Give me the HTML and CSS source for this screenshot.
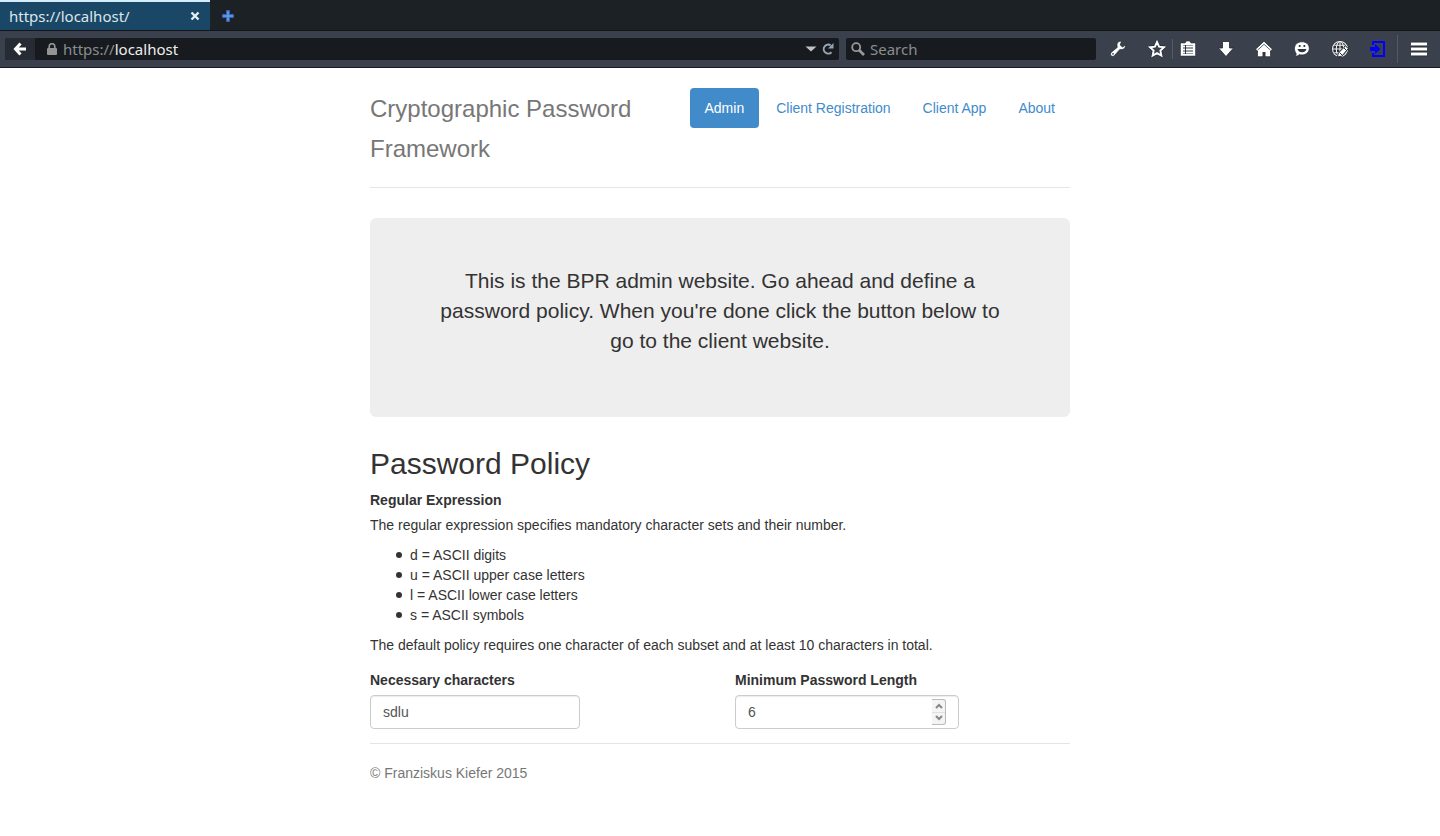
FILE: index.html
```html
<!DOCTYPE html>
<html lang="en">
<head>
<meta charset="utf-8">
<title>Cryptographic Password Framework</title>
<link rel="stylesheet" href="styles.css">
</head>
<body>
<div class="browser">
  <div class="tabs">
    <div class="tab">
      <span class="tab-title">https://localhost/</span>
      <button class="chrome-button" aria-label="Close tab"><svg width="10" height="10" viewBox="0 0 10 10"><path d="M1.500 1.500l7 7M8.500 1.500l-7 7" stroke="#e3eef4" stroke-width="2.400"/></svg></button>
    </div>
    <button class="chrome-button new-tab" aria-label="New tab"><svg width="12" height="12" viewBox="0 0 12 12"><path d="M4.500.5h3v4h4v3h-4v4h-3v-4h-4v-3h4z" fill="#4b80d0" stroke="#3565af"/><path d="M6 1.500v9M1.500 6h9" stroke="#6fa2ee"/></svg></button>
  </div>
  <div class="toolbar">
    <div class="address">
      <button class="chrome-button back" aria-label="Back"><svg width="14" height="14" viewBox="0 0 14 14"><path d="M7.500 1.500L2.500 7l5 5.500M3 7h10" fill="none" stroke="#fff" stroke-width="3"/></svg></button>
      <svg class="lock" width="10" height="12" viewBox="0 0 10 12"><path d="M2.200 6V3.500a2.800 2.800 0 0 1 5.600 0V6" fill="none" stroke="#949494" stroke-width="1.700"/><rect y="5" width="10" height="7" rx="1" fill="#949494"/></svg>
      <span class="url" role="textbox" aria-label="Address"><span class="scheme">https://</span>localhost</span>
      <button class="chrome-button" aria-label="Show history"><svg width="12" height="6" viewBox="0 0 12 6"><path d="M.5.5h11L6 5.500z" fill="#bfc1c2"/></svg></button>
      <button class="chrome-button reload" aria-label="Reload"><svg width="12" height="12" viewBox="0 0 12 12"><path d="M9.500 9.200A4.500 4.500 0 1 1 8.600 2.300" fill="none" stroke="#98a5b5" stroke-width="2"/><path d="M11.500 0v5.500H6z" fill="#98a5b5"/></svg></button>
    </div>
    <label class="search">
      <svg width="14" height="14" viewBox="0 0 14 14"><circle cx="5.200" cy="5.200" r="4" fill="none" stroke="#999" stroke-width="1.800"/><path d="M8 8l5 5" stroke="#999" stroke-width="2.600"/></svg>
      <input type="text" placeholder="Search" aria-label="Search">
    </label>
    <div class="tools">
      <button class="chrome-button tool" aria-label="Developer tools"><svg width="18" height="18" viewBox="0 0 18 18"><path d="M17.500 5l-3 2-2.300-2L13.500 1.500C10.800.8 8.700 2.800 9 5.500c0 .7.200 1.200.4 1.700L3.300 12.300c-2.300 2.400.7 5.600 3.200 3.200l5.300-6c3.300.9 6.100-1.500 5.700-4.500z" fill="#fff" stroke="#20252c" stroke-width=".7"/><circle cx="5" cy="13.800" r=".9" fill="#333a44"/></svg></button>
      <button class="chrome-button tool star" aria-label="Bookmark this page"><svg width="18" height="18" viewBox="0 0 18 18"><path d="M9 2l2.100 4.600 5 .6-3.700 3.400 1 5L9 13.100l-4.400 2.500 1-5L1.900 7.200l5-.6z" fill="#3a414c" stroke="#20252c" stroke-width="3"/><path d="M9 2l2.100 4.600 5 .6-3.700 3.400 1 5L9 13.100l-4.400 2.500 1-5L1.900 7.200l5-.6z" fill="#3a414c" stroke="#fff" stroke-width="1.900"/></svg></button>
      <button class="chrome-button tool list" aria-label="Bookmarks"><svg width="18" height="18" viewBox="0 0 18 18"><path d="M1.500 3H6l1.500-2h3L12 3h4.500v13h-15z" fill="#fff" stroke="#20252c" stroke-width=".5"/><path d="M4 5h10v9H4z" fill="#30363f"/><path d="M4 6.500h2M7 6.500h7M4 9.500h2M7 9.500h7M4 12.500h2M7 12.500h7" stroke="#fff" stroke-width="1.800"/></svg></button>
      <button class="chrome-button tool" aria-label="Downloads"><svg width="18" height="18" viewBox="0 0 18 18"><path d="M5.500 1.500h7V8h4L9 16.500 1.500 8h4z" fill="#fff" stroke="#20252c" stroke-width=".8"/></svg></button>
      <button class="chrome-button tool" aria-label="Home"><svg width="18" height="18" viewBox="0 0 18 18"><path d="M.5 9.300L9 1.200l8.500 8.100L15.500 11v5.700h-13V11z" fill="#fff" stroke="#20252c" stroke-width=".7"/><path d="M2.500 10.200L9 4.300l6.500 5.900" fill="none" stroke="#4a505a" stroke-width=".9"/><path d="M7.500 17v-5h3v5z" fill="#30363f"/></svg></button>
      <button class="chrome-button tool" aria-label="Hello"><svg width="18" height="18" viewBox="0 0 18 18"><path d="M9 1.800c4.200 0 7.300 2.700 7.300 6.500s-3.100 6.700-7.300 6.700c-1 0-1.800-.1-2.700-.4-1 1-2.500 1.700-4.300 1.600 1-.9 1.400-1.900 1.100-2.800-1-1.300-1.600-3-1.600-5C1.500 4.500 4.800 1.800 9 1.800z" fill="#fff" stroke="#20252c" stroke-width=".7"/><path d="M5.800 5h1.700v2H5.800zM10.500 5h1.700v2h-1.700zM4.500 9h9c-.5 2-2.200 3.300-4.500 3.300S5 11 4.500 9z" fill="#30363f"/></svg></button>
      <button class="chrome-button tool" aria-label="Web proxy"><svg width="18" height="18" viewBox="0 0 18 18"><circle cx="9" cy="9" r="8.600" fill="#272c34"/><g fill="none" stroke="#eee" stroke-width="1.100"><circle cx="9" cy="9" r="7.500"/><ellipse cx="9" cy="9" rx="3.700" ry="7.500"/><path d="M9 2v14M2 9h14M3.300 5.300h11.400M3.300 12.700h11.400"/></g><path d="M14.500 6l2.800 2.500-6.500 7.700-4.300.8.800-4z" fill="#fff" stroke="#272c34"/><path d="M8.500 12.500l2.500 2.500M13 8l2.500 2.500" stroke="#272c34"/></svg></button>
      <button class="chrome-button tool" aria-label="Sign in"><svg width="18" height="18" viewBox="0 0 18 18"><path d="M4 5V2h11v14H4v-3" fill="none" stroke="#00f" stroke-width="2"/><path d="M1 7h5V4l5.500 5L6 14v-3H1z" fill="#00f"/></svg></button>
    </div>
    <button class="chrome-button menu" aria-label="Open menu"><svg width="18" height="16" viewBox="0 0 18 16"><path d="M1 3h16M1 8h16M1 13h16" stroke="#20252c" stroke-width="4.500"/><path d="M1 3h16M1 8h16M1 13h16" stroke="#fff" stroke-width="3"/></svg></button>
  </div>
</div>

<div class="container">
  <header class="header">
    <h3 class="brand">Cryptographic Password Framework</h3>
    <nav class="nav">
      <a class="nav-link active" href="#admin">Admin</a>
      <a class="nav-link" href="#registration">Client Registration</a>
      <a class="nav-link" href="#app">Client App</a>
      <a class="nav-link" href="#about">About</a>
    </nav>
  </header>

  <section class="jumbotron">
    <p class="lead">This is the BPR admin website. Go ahead and define a password policy. When you're done click the button below to go to the client website.</p>
  </section>

  <main>
    <h2 class="heading">Password Policy</h2>
    <h4 class="label">Regular Expression</h4>
    <p class="text">The regular expression specifies mandatory character sets and their number.</p>
    <ul class="sets">
      <li>d = ASCII digits</li>
      <li>u = ASCII upper case letters</li>
      <li>l = ASCII lower case letters</li>
      <li>s = ASCII symbols</li>
    </ul>
    <p class="text">The default policy requires one character of each subset and at least 10 characters in total.</p>
    <form class="form">
      <div>
        <label class="label" for="chars">Necessary characters</label>
        <input class="control" id="chars" type="text" value="sdlu">
      </div>
      <div>
        <label class="label" for="length">Minimum Password Length</label>
        <div class="number">
          <input class="control" id="length" type="number" value="6">
          <div class="spinner">
            <button type="button" class="step" aria-label="Increase"><svg width="8" height="6" viewBox="0 0 8 6"><path d="M1 5l3-3 3 3" fill="none" stroke="#888" stroke-width="2"/></svg></button>
            <button type="button" class="step" aria-label="Decrease"><svg width="8" height="6" viewBox="0 0 8 6"><path d="M1 1l3 3 3-3" fill="none" stroke="#888" stroke-width="2"/></svg></button>
          </div>
        </div>
      </div>
    </form>
  </main>

  <footer class="footer">© Franziskus Kiefer 2015</footer>
</div>
</body>
</html>
```
FILE: styles.css
```css
* { box-sizing: border-box; }
body {
  margin: 0;
  background: #fff;
  color: #333;
  font: 14px/20px "Liberation Sans", Arial, sans-serif;
}
svg { display: block; flex: none; }

/* Browser chrome */
.browser { font: 15px/20px "Noto Sans", "Open Sans", sans-serif; }
.chrome-button {
  display: flex;
  align-items: center;
  justify-content: center;
  padding: 0;
  border: 0;
  background: none;
}
.tabs {
  display: flex;
  height: 31px;
  background: #1c2126;
  border-bottom: 1px solid #12161a;
}
.tab {
  display: flex;
  align-items: center;
  justify-content: space-between;
  width: 210px;
  padding: 0 10px 0 9px;
  background: #1a4766;
  border-top: 2px solid #d4edfc;
  color: #dce6ec;
}
.new-tab { padding: 2px 12px 0; }
.toolbar {
  display: flex;
  align-items: center;
  height: 37px;
  padding-left: 5px;
  background: #3a414c;
  border-bottom: 1px solid #16191d;
}
.address, .search {
  display: flex;
  align-items: center;
  height: 22px;
  background: #171b1f;
  border-radius: 2px;
}
.address {
  flex: 1;
  padding-right: 5px;
  color: #eeeeec;
}
.back {
  width: 30px;
  height: 22px;
  background: #272c34;
  border-radius: 2px 0 0 2px;
}
.lock { margin: 0 6px 0 12px; }
.url { flex: 1; }
.scheme { color: #8b8d8f; }
.reload { margin-left: 5px; }
.search {
  width: 250px;
  gap: 5px;
  margin-left: 7px;
  padding-left: 5px;
}
.search input {
  flex: 1;
  min-width: 0;
  padding: 0;
  border: 0;
  outline: 0;
  background: none;
  color: #eee;
  font: inherit;
}
.search input::placeholder { color: #8b8d8f; opacity: 1; }
.tools {
  display: flex;
  align-items: center;
  padding-left: 2px;
}
.tool { width: 38px; height: 20px; }
.tool.star {
  width: 37px;
  padding-left: 6px;
  border-right: 1px solid #545b65;
}
.tool.list { width: 34px; padding-right: 4px; }
.menu {
  width: 43px;
  height: 28px;
  border-left: 1px solid #535a64;
}

/* Page */
.container {
  max-width: 700px;
  margin: 0 auto;
  padding-top: 20px;
}
.header {
  display: flex;
  align-items: flex-start;
  margin-bottom: 30px;
  padding-bottom: 18px;
  border-bottom: 1px solid #e5e5e5;
}
.brand {
  flex: 1;
  margin: 0;
  padding-top: 1px;
  color: #777;
  font-size: 24px;
  font-weight: 400;
  line-height: 40px;
}
.nav { display: flex; gap: 2px; }
.nav-link {
  padding: 10px 15px;
  border-radius: 4px;
  color: #428bca;
  text-decoration: none;
}
.nav-link.active { background: #428bca; color: #fff; }
.jumbotron {
  margin-bottom: 30px;
  padding: 48px 60px 61px;
  border-radius: 6px;
  background: #eee;
  text-align: center;
}
.lead { margin: 0; font-size: 21px; line-height: 30px; }
.heading {
  margin: 0 0 10px;
  font-size: 30px;
  font-weight: 400;
  line-height: 33px;
}
.label {
  display: block;
  margin: 0 0 5px;
  font-size: 14px;
  font-weight: 700;
}
.text { margin: 0 0 10px; }
.sets { margin: 0 0 10px; padding-left: 26px; list-style: none; }
.sets li { display: flex; align-items: center; gap: 8px; }
.sets li::before {
  content: "";
  width: 6px;
  height: 6px;
  border-radius: 50%;
  background: #333;
}
.form {
  display: grid;
  grid-template-columns: 1fr 1fr;
  gap: 30px;
  padding-top: 5px;
}
.control {
  display: block;
  width: 210px;
  height: 34px;
  padding: 6px 12px;
  border: 1px solid #ccc;
  border-radius: 4px;
  background: #fff;
  box-shadow: inset 0 1px 1px rgba(0, 0, 0, .075);
  color: #555;
  font: inherit;
}
.number { position: relative; width: 224px; }
.number .control { width: 100%; appearance: textfield; }
.number .control::-webkit-inner-spin-button { appearance: none; margin: 0; }
.spinner {
  position: absolute;
  top: 4px;
  right: 13px;
  width: 14px;
  height: 26px;
  display: flex;
  flex-direction: column;
  border: 1px solid #bbb;
  border-left: 0;
  border-radius: 0 3px 3px 0;
  background: #f4f4f4;
}
.step {
  flex: 1;
  display: flex;
  align-items: center;
  justify-content: center;
  padding: 0;
  border: 0;
  background: none;
}
.step + .step { border-top: 1px solid #e0e0e0; }
.footer {
  margin-top: 14px;
  padding-top: 19px;
  border-top: 1px solid #e5e5e5;
  color: #777;
}
```
